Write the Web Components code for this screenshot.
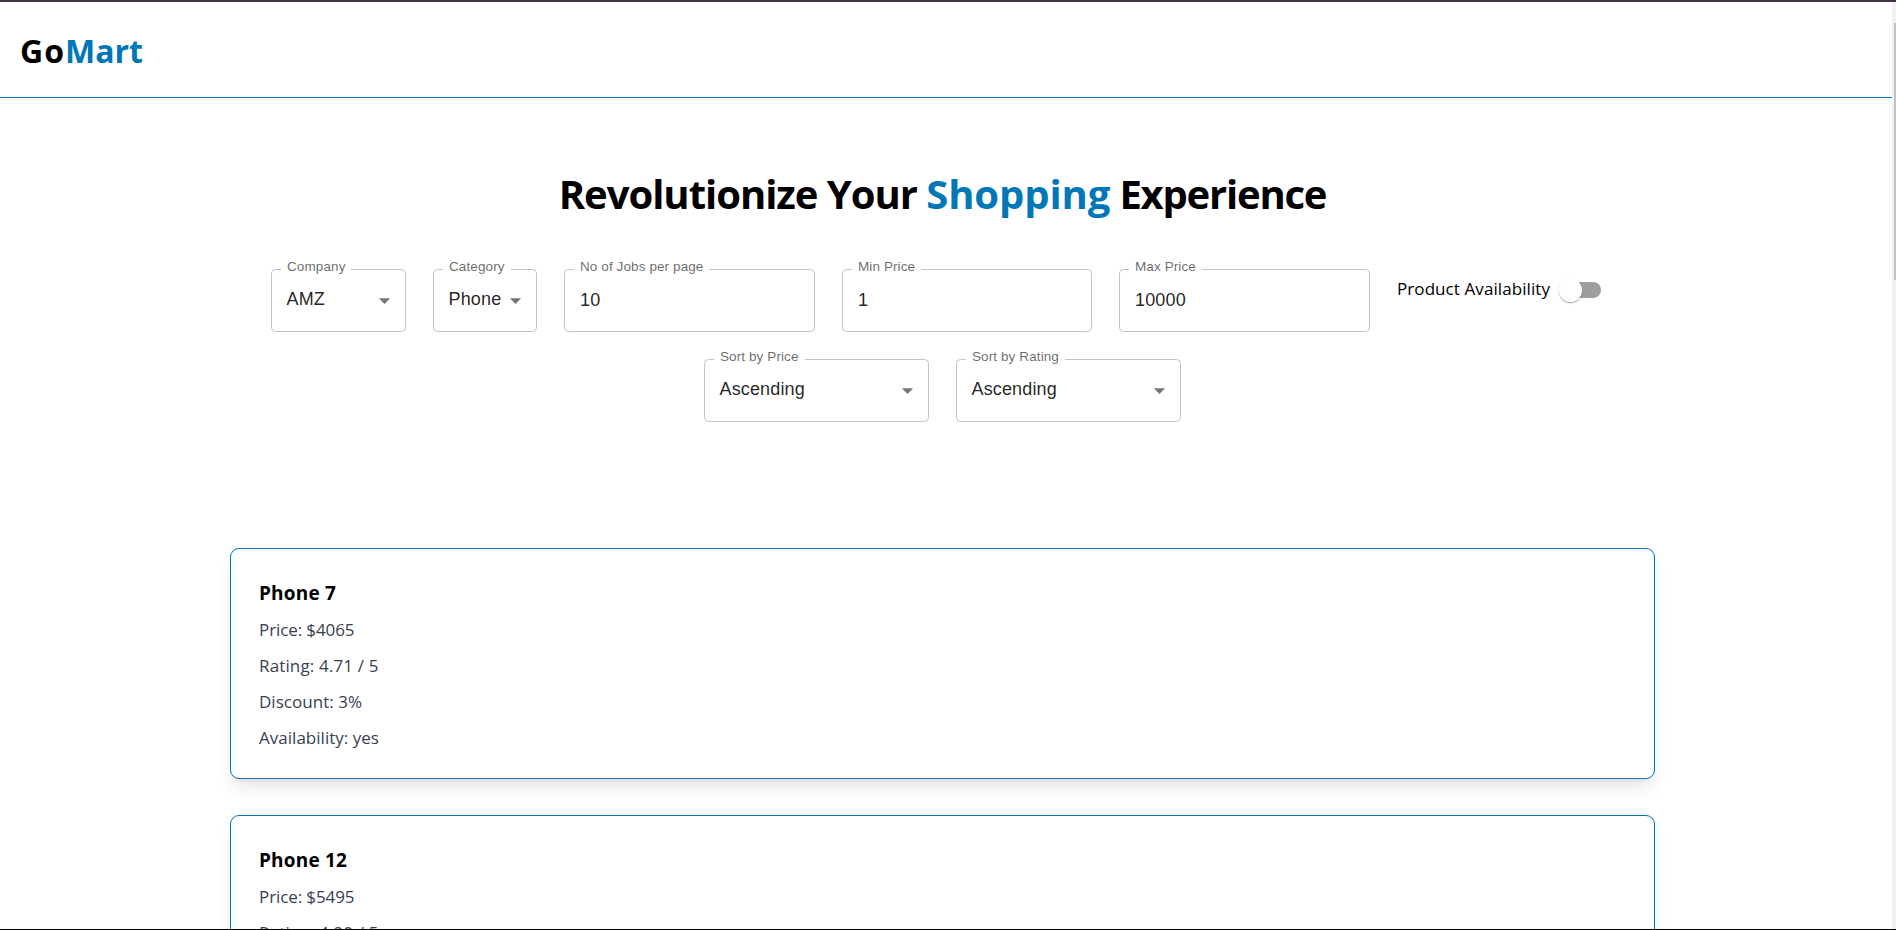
<!DOCTYPE html>
<html lang="en">
<head>
<meta charset="utf-8">
<title>GoMart</title>
<style>
html,body{margin:0;height:100%;overflow:hidden;background:#fff}
body{font-family:"Open Sans","Noto Sans",sans-serif;color:#000;--brand:#0077b6}
</style>
</head>
<body>
<gomart-app></gomart-app>
<script>
const define = (name, html, ready) => {
  const t = document.createElement('template');
  t.innerHTML = html;
  customElements.define(name, class extends HTMLElement {
    constructor() {
      super();
      this.attachShadow({mode: 'open'}).append(t.content.cloneNode(true));
    }
    connectedCallback() { if (ready) ready.call(this, this.shadowRoot); }
  });
};

/* A single line of text, tracked so that it fills the width in its "w" attribute. */
define('fit-text', `<style>:host{display:inline-block;white-space:pre}</style><slot></slot>`, function () {
  const w = parseFloat(this.getAttribute('w'));
  const natural = this.getBoundingClientRect().width;
  const n = this.textContent.length;
  if (w && n) this.style.letterSpacing = ((w - natural) / n).toFixed(3) + 'px';
});

define('site-header', `<style>
:host{display:flex;box-sizing:border-box;height:96px;padding:26px 20px 0;border-bottom:1px solid var(--brand);font-size:32px;font-weight:700;line-height:46px}
b{color:var(--brand);font-weight:700}
</style><div><fit-text w="45">Go</fit-text><b><fit-text w="78">Mart</fit-text></b></div>`);

define('hero-title', `<style>
:host{display:block;text-align:center;font-size:40px;line-height:54px;font-weight:700;white-space:nowrap}
h1{font:inherit;margin:0}
b{color:var(--brand);font-weight:700}
</style><h1><fit-text w="367.5">Revolutionize Your </fit-text><b><fit-text w="184">Shopping</fit-text></b><fit-text w="216"> Experience</fit-text></h1>`);

define('outlined-field', `<style>
:host{display:block;position:relative;box-sizing:border-box;height:63px;border:1px solid #c4c4c4;border-radius:4.5px;padding:16px 8px 0 14.5px;font:18px/27px "Liberation Sans",Arial,sans-serif;letter-spacing:.15px;color:rgba(0,0,0,.87)}
:host([input]){padding-top:17px;padding-left:15px}
label{position:absolute;left:9px;top:-13px;padding:0 6px;background:#fff;font-size:13.5px;line-height:20px;letter-spacing:.1px;color:rgba(0,0,0,.6);white-space:nowrap}
svg{position:absolute;right:7px;top:17px;width:27px;height:27px;fill:rgba(0,0,0,.54)}
:host([input]) svg{display:none}
</style><label></label><slot></slot><svg viewBox="0 0 24 24"><path d="M7 10l5 5 5-5z"/></svg>`, function (r) {
  r.querySelector('label').textContent = this.getAttribute('label');
  this.style.width = this.getAttribute('width') + 'px';
});

define('toggle-switch', `<style>
:host{display:flex;align-items:center;width:43px;height:24px}
i{display:block;flex:none}
.thumb{position:relative;width:23px;height:23px;border-radius:50%;background:#fff;z-index:1;box-shadow:0 2px 1px -1px rgba(0,0,0,.2),0 1px 1px rgba(0,0,0,.14),0 1px 3px rgba(0,0,0,.12)}
.track{width:38px;height:16px;margin-left:-19px;border-radius:8px;background:#9e9e9e}
</style><i class="thumb"></i><i class="track"></i>`);

define('filter-bar', `<style>
:host{display:flex;flex-direction:column;gap:27px}
.row{display:flex;gap:27px;justify-content:center}
.avail{display:flex;align-items:center;height:42px;width:217px;font-size:17px;line-height:27px}
fit-text{margin-right:9px;padding-bottom:4px}
</style>
<div class="row">
<outlined-field label="Company" width="135">AMZ</outlined-field>
<outlined-field label="Category" width="104">Phone</outlined-field>
<outlined-field input label="No of Jobs per page" width="251">10</outlined-field>
<outlined-field input label="Min Price" width="250">1</outlined-field>
<outlined-field input label="Max Price" width="251">10000</outlined-field>
<div class="avail"><fit-text w="153">Product Availability</fit-text><toggle-switch></toggle-switch></div>
</div>
<div class="row">
<outlined-field label="Sort by Price" width="225">Ascending</outlined-field>
<outlined-field label="Sort by Rating" width="225">Ascending</outlined-field>
</div>`);

define('product-card', `<style>
:host{display:block;box-sizing:border-box;flex:none;height:231px;padding:28px;border:1px solid var(--brand);border-radius:9px;background:#fff;box-shadow:0 11.25px 16.9px -3.4px rgba(0,0,0,.1),0 4.5px 6.75px -4.5px rgba(0,0,0,.1)}
h2{margin:0 0 6px;font-size:19px;line-height:33px;font-weight:700}
div{display:flex;flex-direction:column;gap:9px;font-size:17px;line-height:27px;color:#374151}
</style><h2><slot name="name"></slot></h2><div><slot></slot></div>`);

define('gomart-app', `<style>
:host{display:grid;grid-template:2px minmax(0,1fr) 1px / minmax(0,1fr) 4px;height:100vh}
.top,.end{grid-column:1/3;background:#443344}
.end{background:#000}
.page{overflow:hidden}
main{width:1885px}
hero-title{margin-top:69px}
filter-bar{margin-top:48px}
.list{display:flex;flex-direction:column;gap:36px;width:1425px;margin:126px auto 0}
.bar{background:#f1f1f1;padding:21px 0 0 2px}
.bar i{display:block;height:257px;background:#c1c1c1}
</style>
<div class="top"></div>
<div class="page">
<site-header></site-header>
<main>
<hero-title></hero-title>
<filter-bar></filter-bar>
<div class="list">
<product-card><fit-text slot="name" w="77">Phone 7</fit-text>
<span><fit-text w="95.5">Price: $4065</fit-text></span><span><fit-text w="119.5">Rating: 4.71 / 5</fit-text></span><span><fit-text w="103">Discount: 3%</fit-text></span><span><fit-text w="120">Availability: yes</fit-text></span></product-card>
<product-card><fit-text slot="name" w="88">Phone 12</fit-text>
<span><fit-text w="95.5">Price: $5495</fit-text></span><span><fit-text w="119.5">Rating: 4.20 / 5</fit-text></span></product-card>
</div>
</main>
</div>
<div class="bar"><i></i></div>
<div class="end"></div>`);
</script>
</body>
</html>
